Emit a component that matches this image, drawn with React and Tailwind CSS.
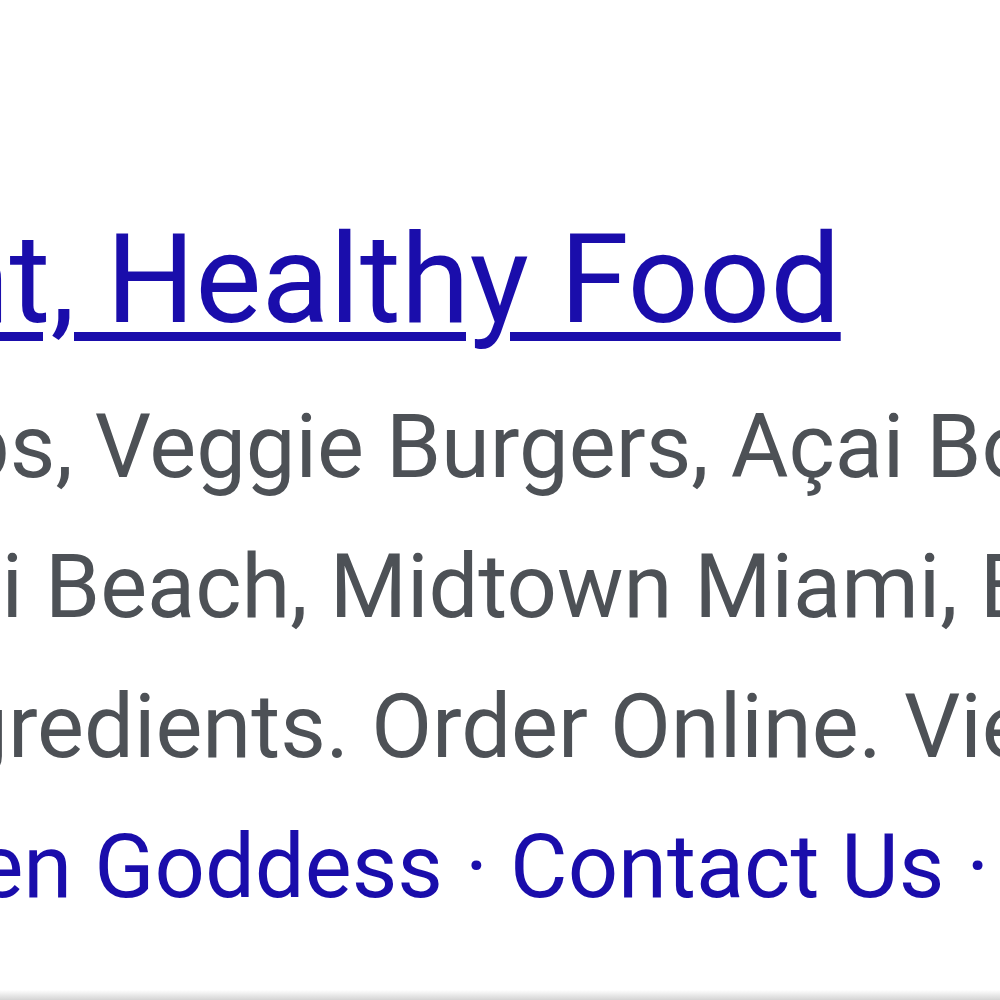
export default function App() {
  return (
    <div className="w-[1000px] h-[1000px] overflow-hidden bg-white relative" style={{ fontFamily: 'Roboto, "Noto Sans", sans-serif' }}>
      <div className="flex flex-col pt-[192px]">
        <div className="whitespace-nowrap text-[125px] leading-[175px] text-[#1a0dab] -ml-[553px]">
          <a href="#" className="underline decoration-[9px] underline-offset-[10px]">Restaurant, Healthy Food</a>
        </div>
        <div className="mt-[10px] flex flex-col text-[88.5px] leading-[140px] text-[#4d5156] whitespace-nowrap">
          <div className="-ml-[194px]">Wraps, Veggie Burgers, Açai Bowls</div>
          <div className="-ml-[223px]">Miami Beach, Midtown Miami, Brickell</div>
          <div className="-ml-[355px]">Fresh Ingredients. Order Online. View Menu</div>
          <div className="-ml-[160px] text-[#1a0dab]">
            <a href="#">Green Goddess</a> · <a href="#">Contact Us</a> · <a href="#">Order Online</a>
          </div>
        </div>
      </div>
      <div className="absolute left-0 right-0 bottom-0 h-[10px] bg-gradient-to-b from-white to-[#d4d4d4]" />
    </div>
  );
}
